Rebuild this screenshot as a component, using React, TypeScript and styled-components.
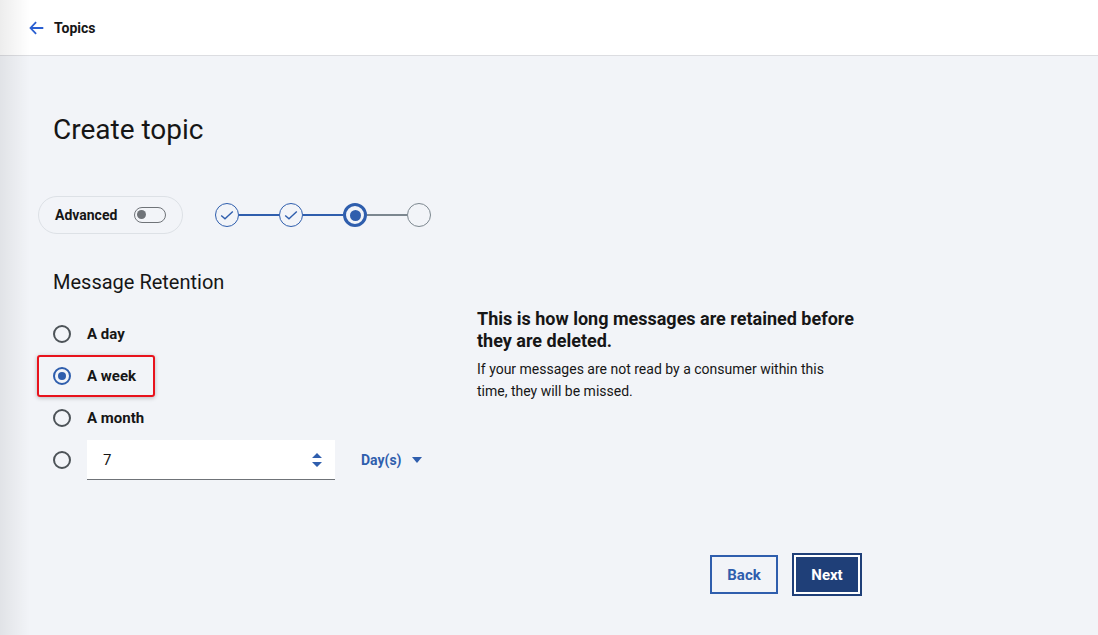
import { createGlobalStyle, styled } from 'styled-components';

const GlobalStyle = createGlobalStyle`
  html, body {
    margin: 0;
    padding: 0;
    background: #f2f4f8;
    font-family: Roboto, 'Noto Sans', sans-serif;
    color: #161616;
  }
`;

const Page = styled.div`
  position: relative;
  width: 1098px;
  height: 635px;
  overflow: hidden;
  background: #f2f4f8;
`;

const EdgeShade = styled.div`
  position: absolute;
  top: 0;
  left: 0;
  bottom: 0;
  width: 30px;
  pointer-events: none;
  background: linear-gradient(to right, rgba(0, 0, 0, 0.07), rgba(0, 0, 0, 0));
`;

const Header = styled.header`
  height: 56px;
  background: #ffffff;
  border-bottom: 1px solid #dcdde1;
  display: flex;
  align-items: center;
  padding-left: 28px;
  gap: 8px;
  box-sizing: border-box;
`;

const BackLink = styled.span`
  font-size: 14px;
  font-weight: 700;
  color: #161616;
`;

const Main = styled.main`
  padding: 56px 0 0 53px;
`;

const Title = styled.h1`
  margin: 0;
  font-size: 28px;
  font-weight: 400;
  line-height: 36px;
`;

const ControlRow = styled.div`
  display: flex;
  align-items: center;
  gap: 32px;
  margin: 48px 0 0 -15px;
`;

const AdvancedPill = styled.div`
  display: flex;
  align-items: center;
  justify-content: space-between;
  height: 38px;
  padding: 0 16px;
  border: 1px solid #dde1e6;
  border-radius: 20px;
  box-sizing: border-box;
  width: 145px;
`;

const PillLabel = styled.span`
  font-size: 14px;
  font-weight: 700;
`;

const Switch = styled.span`
  position: relative;
  width: 32px;
  height: 16px;
  border: 1.5px solid #6f7378;
  border-radius: 9px;
  box-sizing: border-box;

  &::after {
    content: '';
    position: absolute;
    left: 2px;
    top: 2px;
    width: 9px;
    height: 9px;
    border-radius: 50%;
    background: #6f7378;
  }
`;

const Steps = styled.div`
  display: flex;
  align-items: center;
`;

const Step = styled.span<{ $state: 'done' | 'current' | 'todo' }>`
  width: 24px;
  height: 24px;
  border-radius: 50%;
  box-sizing: border-box;
  display: flex;
  align-items: center;
  justify-content: center;
  border: ${p => (p.$state === 'current' ? '3px' : '1.5px')} solid
    ${p => (p.$state === 'todo' ? '#7c878f' : '#2f5ead')};
  background: #f2f4f8;
`;

const Dot = styled.span`
  width: 11px;
  height: 11px;
  border-radius: 50%;
  background: #2f5ead;
`;

const Connector = styled.span<{ $active: boolean }>`
  width: 40px;
  height: 2px;
  background: ${p => (p.$active ? '#2f5ead' : '#7c878f')};
`;

const Columns = styled.div`
  display: flex;
  margin-top: 34px;
`;

const LeftCol = styled.div`
  width: 424px;
`;

const SectionTitle = styled.h2`
  margin: 0;
  font-size: 20px;
  font-weight: 400;
  line-height: 28px;
`;

const Options = styled.div`
  display: flex;
  flex-direction: column;
  margin-top: 29px;
  gap: 24px;
`;

const Option = styled.label<{ $highlight?: boolean }>`
  position: relative;
  display: flex;
  align-items: center;
  gap: 16px;
  height: 18px;
  font-size: 15px;
  font-weight: 700;

  ${p =>
    p.$highlight &&
    `&::before {
      content: '';
      position: absolute;
      left: -16px;
      top: -12px;
      width: 114px;
      height: 38px;
      border: 2px solid #e8121c;
      border-radius: 3px;
      box-shadow: 0 1px 4px rgba(0, 0, 0, 0.25);
    }`}
`;

const Radio = styled.span<{ $checked?: boolean }>`
  width: 18px;
  height: 18px;
  border-radius: 50%;
  border: 2px solid ${p => (p.$checked ? '#2f5ead' : '#4d5358')};
  box-sizing: border-box;
  display: flex;
  align-items: center;
  justify-content: center;
  flex: none;

  &::after {
    content: '';
    display: ${p => (p.$checked ? 'block' : 'none')};
    width: 8px;
    height: 8px;
    border-radius: 50%;
    background: #2f5ead;
  }
`;

const CustomRow = styled.div`
  display: flex;
  align-items: center;
  gap: 16px;
  margin-top: 13px;
`;

const NumberField = styled.div`
  width: 248px;
  height: 40px;
  background: #ffffff;
  border-bottom: 1px solid #6f7378;
  box-sizing: border-box;
  display: flex;
  align-items: center;
  justify-content: space-between;
  padding: 0 12px 0 16px;
  font-size: 15px;
`;

const UnitSelect = styled.span`
  display: flex;
  align-items: center;
  gap: 10px;
  margin-left: 10px;
  color: #2f5ead;
  font-size: 14px;
  font-weight: 700;
`;

const RightCol = styled.div`
  margin-top: 40px;
  width: 400px;
`;

const InfoHeading = styled.h3`
  margin: 0;
  font-size: 18px;
  font-weight: 700;
  line-height: 22px;
`;

const InfoText = styled.p`
  margin: 6px 0 0;
  font-size: 14px;
  line-height: 22px;
  width: 355px;
`;

const Footer = styled.div`
  display: flex;
  justify-content: flex-end;
  align-items: center;
  gap: 14px;
  width: 809px;
  margin-top: 73px;
`;

const Button = styled.button<{ $primary?: boolean }>`
  font-family: inherit;
  font-size: 15px;
  font-weight: 700;
  height: ${p => (p.$primary ? '43px' : '39px')};
  width: ${p => (p.$primary ? '70px' : '68px')};
  padding: 0;
  border: 2px solid ${p => (p.$primary ? '#1f3f78' : '#2f5ead')};
  background: ${p => (p.$primary ? '#1f3f78' : 'transparent')};
  color: ${p => (p.$primary ? '#ffffff' : '#2f5ead')};
  box-shadow: ${p => (p.$primary ? 'inset 0 0 0 2px #ffffff' : 'none')};
`;

const Check = () => (
  <svg width="16" height="16" viewBox="0 0 16 16" fill="none">
    <path d="M2.2 8.4 L6 11.8 L13.8 4.6" stroke="#2f5ead" strokeWidth="1.4" />
  </svg>
);

export default function App() {
  return (
    <Page>
      <GlobalStyle />
      <Header>
        <svg width="18" height="18" viewBox="0 0 20 20" fill="none">
          <path d="M17 10 H3 M9 3.5 L2.8 10 L9 16.5" stroke="#2a5fd1" strokeWidth="2" />
        </svg>
        <BackLink>Topics</BackLink>
      </Header>
      <Main>
        <Title>Create topic</Title>
        <ControlRow>
          <AdvancedPill>
            <PillLabel>Advanced</PillLabel>
            <Switch />
          </AdvancedPill>
          <Steps>
            <Step $state="done"><Check /></Step>
            <Connector $active />
            <Step $state="done"><Check /></Step>
            <Connector $active />
            <Step $state="current"><Dot /></Step>
            <Connector $active={false} />
            <Step $state="todo" />
          </Steps>
        </ControlRow>
        <Columns>
          <LeftCol>
            <SectionTitle>Message Retention</SectionTitle>
            <Options>
              <Option><Radio />A day</Option>
              <Option $highlight><Radio $checked />A week</Option>
              <Option><Radio />A month</Option>
            </Options>
            <CustomRow>
              <Radio />
              <NumberField>
                <span>7</span>
                <svg width="12" height="18" viewBox="0 0 12 18">
                  <path d="M6 2 L11 7 H1 Z M1 11 H11 L6 16 Z" fill="#2f5ead" />
                </svg>
              </NumberField>
              <UnitSelect>
                Day(s)
                <svg width="10" height="6" viewBox="0 0 10 6">
                  <path d="M0 0 H10 L5 6 Z" fill="#2f5ead" />
                </svg>
              </UnitSelect>
            </CustomRow>
          </LeftCol>
          <RightCol>
            <InfoHeading>This is how long messages are retained before they are deleted.</InfoHeading>
            <InfoText>If your messages are not read by a consumer within this time, they will be missed.</InfoText>
          </RightCol>
        </Columns>
        <Footer>
          <Button>Back</Button>
          <Button $primary>Next</Button>
        </Footer>
      </Main>
      <EdgeShade />
    </Page>
  );
}
